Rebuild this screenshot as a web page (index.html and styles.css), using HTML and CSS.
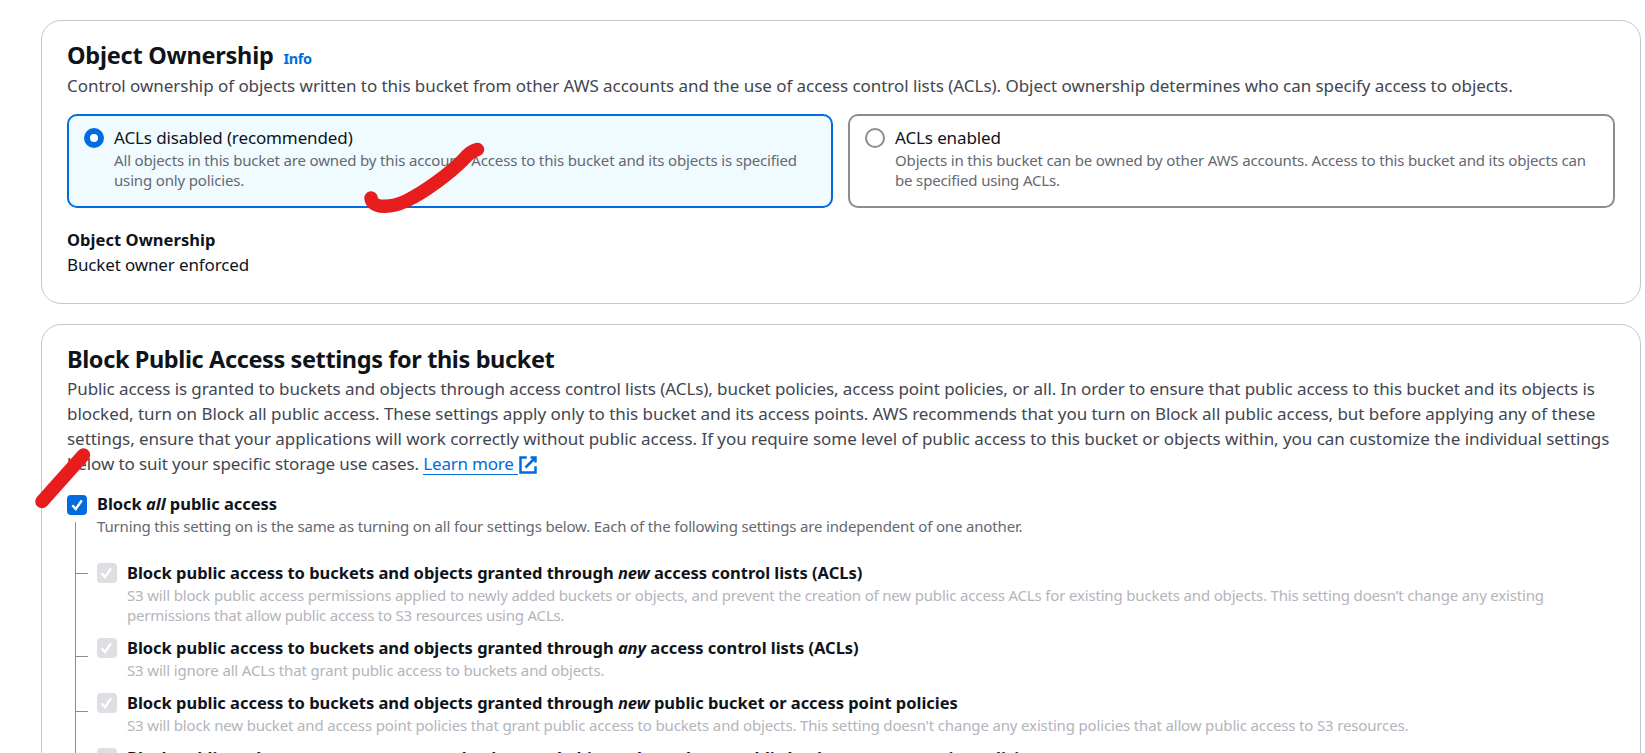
FILE: index.html
```html
<!DOCTYPE html>
<html lang="en">
<head>
<meta charset="utf-8">
<title>Create bucket</title>
<link rel="stylesheet" href="styles.css">
</head>
<body>
<main class="page">
  <section class="card card--ownership">
    <div class="heading">
      <h2 class="title title--short">Object Ownership</h2>
      <a class="info">Info</a>
    </div>
    <p class="lead">Control ownership of objects written to this bucket from other AWS accounts and the use of access control lists (ACLs). Object ownership determines who can specify access to objects.</p>
    <div class="tiles">
      <div class="tile tile--selected">
        <span class="radio radio--on"></span>
        <div>
          <div class="tile-label">ACLs disabled (recommended)</div>
          <div class="hint">All objects in this bucket are owned by this account. Access to this bucket and its objects is specified<br>using only policies.</div>
        </div>
      </div>
      <div class="tile">
        <span class="radio"></span>
        <div>
          <div class="tile-label">ACLs enabled</div>
          <div class="hint">Objects in this bucket can be owned by other AWS accounts. Access to this bucket and its objects can<br>be specified using ACLs.</div>
        </div>
      </div>
    </div>
    <div class="pair">
      <div class="strong">Object Ownership</div>
      <div class="value">Bucket owner enforced</div>
    </div>
  </section>

  <section class="card card--access">
    <h2 class="title">Block Public Access settings for this bucket</h2>
    <p class="lead">
      <span class="line line--tight">Public access is granted to buckets and objects through access control lists (ACLs), bucket policies, access point policies, or all. In order to ensure that public access to this bucket and its objects is</span>
      <span class="line">blocked, turn on Block all public access. These settings apply only to this bucket and its access points. AWS recommends that you turn on Block all public access, but before applying any of these</span>
      <span class="line">settings, ensure that your applications will work correctly without public access. If you require some level of public access to this bucket or objects within, you can customize the individual settings</span>
      <span class="line line--link">below to suit your specific storage use cases. <a class="link">Learn more&nbsp;</a><svg class="external" viewBox="0 0 16 16"><path d="M10 2h4v4M6 10l8-8M14 9.05V14H2V2h5"/></svg></span>
    </p>
    <div class="check">
      <span class="box"><svg viewBox="0 0 20 20"><path d="M5.3 10.3l3.5 3.7 6-8.6"/></svg></span>
      <div>
        <div class="strong">Block <em>all</em> public access</div>
        <div class="hint">Turning this setting on is the same as turning on all four settings below. Each of the following settings are independent of one another.</div>
      </div>
    </div>
    <div class="tree">
      <div class="check check--off check--first">
        <span class="box"><svg viewBox="0 0 20 20"><path d="M4.5 10.3l3.5 3.7 6-8.6"/></svg></span>
        <div>
          <div class="strong">Block public access to buckets and objects granted through <em>new</em> access control lists (ACLs)</div>
          <div class="hint">S3 will block public access permissions applied to newly added buckets or objects, and prevent the creation of new public access ACLs for existing buckets and objects. This setting doesn’t change any existing<br><span class="hint--tight">permissions that allow public access to S3 resources using ACLs.</span></div>
        </div>
      </div>
      <div class="check check--off">
        <span class="box"><svg viewBox="0 0 20 20"><path d="M4.5 10.3l3.5 3.7 6-8.6"/></svg></span>
        <div>
          <div class="strong">Block public access to buckets and objects granted through <em>any</em> access control lists (ACLs)</div>
          <div class="hint">S3 will ignore all ACLs that grant public access to buckets and objects.</div>
        </div>
      </div>
      <div class="check check--off">
        <span class="box"><svg viewBox="0 0 20 20"><path d="M4.5 10.3l3.5 3.7 6-8.6"/></svg></span>
        <div>
          <div class="strong">Block public access to buckets and objects granted through <em>new</em> public bucket or access point policies</div>
          <div class="hint">S3 will block new bucket and access point policies that grant public access to buckets and objects. This setting doesn't change any existing policies that allow public access to S3 resources.</div>
        </div>
      </div>
      <div class="check check--off">
        <span class="box"><svg viewBox="0 0 20 20"><path d="M4.5 10.3l3.5 3.7 6-8.6"/></svg></span>
        <div>
          <div class="strong">Block public and cross-account access to buckets and objects through <em>any</em> public bucket or access point policies</div>
        </div>
      </div>
    </div>
  </section>
  <!-- hand-drawn marker strokes -->
  <svg class="marks" viewBox="0 0 1645 753">
    <path d="M371 198C372 209 391 208 406 201C425 192 450 173 463 160C468 154 472 150.500 477.500 149.500"/>
    <path d="M83.500 455L42 501.500"/>
  </svg>
</main>
</body>
</html>
```
FILE: styles.css
```css
* { box-sizing: border-box; }

body {
  margin: 0;
  height: 753px;
  overflow: hidden;
  background: #fff;
  color: #0f141a;
  font: 17px/25px "Noto Sans", sans-serif;
}

.page {
  position: relative;
  display: flex;
  flex-direction: column;
  gap: 20px;
  height: 753px;
  overflow: hidden;
  padding: 20px 4px 0 41px;
}

.card {
  flex: none;
  border: 1px solid #c6c6cd;
  border-radius: 20px;
  padding: 19px 25px 0;
}

.card--ownership { height: 284px; }
.card--access { height: 560px; }

.heading { display: flex; align-items: baseline; gap: 10px; }

.title {
  margin: 0;
  font-size: 23.5px;
  line-height: 30px;
  font-weight: 700;
  letter-spacing: -0.39px;
}
.title--short { letter-spacing: -0.24px; }

.info {
  color: #006ce0;
  font-size: 14.5px;
  line-height: 20px;
  font-weight: 700;
  letter-spacing: -0.4px;
}

.lead {
  margin: 3px 0 0;
  color: #424650;
  letter-spacing: -0.045px;
  white-space: nowrap;
}
.card--access .lead { margin-top: 2px; }

.line { display: block; }
.line--tight { letter-spacing: -0.08px; }
.line--link { display: flex; letter-spacing: -0.11px; white-space: pre; }

.link {
  height: 24px;
  color: #006ce0;
  border-bottom: 1px solid #006ce0;
  letter-spacing: -0.22px;
}

.external {
  width: 20px;
  height: 20px;
  margin-top: 4px;
  fill: none;
  stroke: #006ce0;
  stroke-width: 2;
}

.tiles {
  display: grid;
  grid-template-columns: 1fr 1fr;
  gap: 16px;
  margin-top: 16px;
}

.tile {
  display: flex;
  gap: 10px;
  height: 94px;
  padding: 9px 15px;
  border: 2px solid #8c8c94;
  border-radius: 10px;
}
.tile + .tile { margin-left: -1px; }
.tile--selected { border-color: #006ce0; background: #f0fbff; }

.tile-label { letter-spacing: -0.12px; }

.radio {
  flex: none;
  width: 20px;
  height: 20px;
  margin-top: 3px;
  border: 2px solid #8c8c94;
  border-radius: 50%;
  background: #fff;
}
.radio--on { border: 6px solid #006ce0; }

.hint {
  color: #656871;
  font-size: 15px;
  line-height: 20px;
  letter-spacing: -0.155px;
  white-space: nowrap;
}
.check--first .hint { letter-spacing: -0.17px; }
.check--first .hint--tight { letter-spacing: -0.21px; }

.pair { margin-top: 19px; }
.strong { font-weight: 700; font-size: 16.5px; letter-spacing: -0.03px; white-space: nowrap; }
.pair .strong { letter-spacing: 0.05px; }
.value { letter-spacing: -0.14px; }

.check { position: relative; display: flex; gap: 10px; }
.card--access > .check { margin-top: 15px; }

.box {
  flex: none;
  width: 20px;
  height: 20px;
  margin-top: 4px;
  border-radius: 4px;
  background: #006ce0;
}
.box svg {
  display: block;
  width: 20px;
  height: 20px;
  fill: none;
  stroke: #fff;
  stroke-width: 2.4;
}

.tree {
  position: relative;
  display: flex;
  flex-direction: column;
  gap: 10px;
  height: 237px;
  padding: 24px 0 0 30px;
}
.tree::before {
  content: "";
  position: absolute;
  left: 8px;
  top: -14px;
  bottom: 0;
  width: 1px;
  background: #8c8c94;
}

.check--off .box { margin-top: 3px; background: #dedee3; }
.check--off .hint { color: #b4b4bb; }
.check--off::before {
  content: "";
  position: absolute;
  left: -21px;
  top: 21px;
  width: 12px;
  height: 1px;
  background: #8c8c94;
}
.check--first::before { top: 13px; }

.marks {
  position: absolute;
  left: 0;
  top: 0;
  width: 1645px;
  height: 753px;
  fill: none;
  stroke: #e71d1d;
  stroke-width: 13.5;
  stroke-linecap: round;
  stroke-linejoin: round;
}
```
